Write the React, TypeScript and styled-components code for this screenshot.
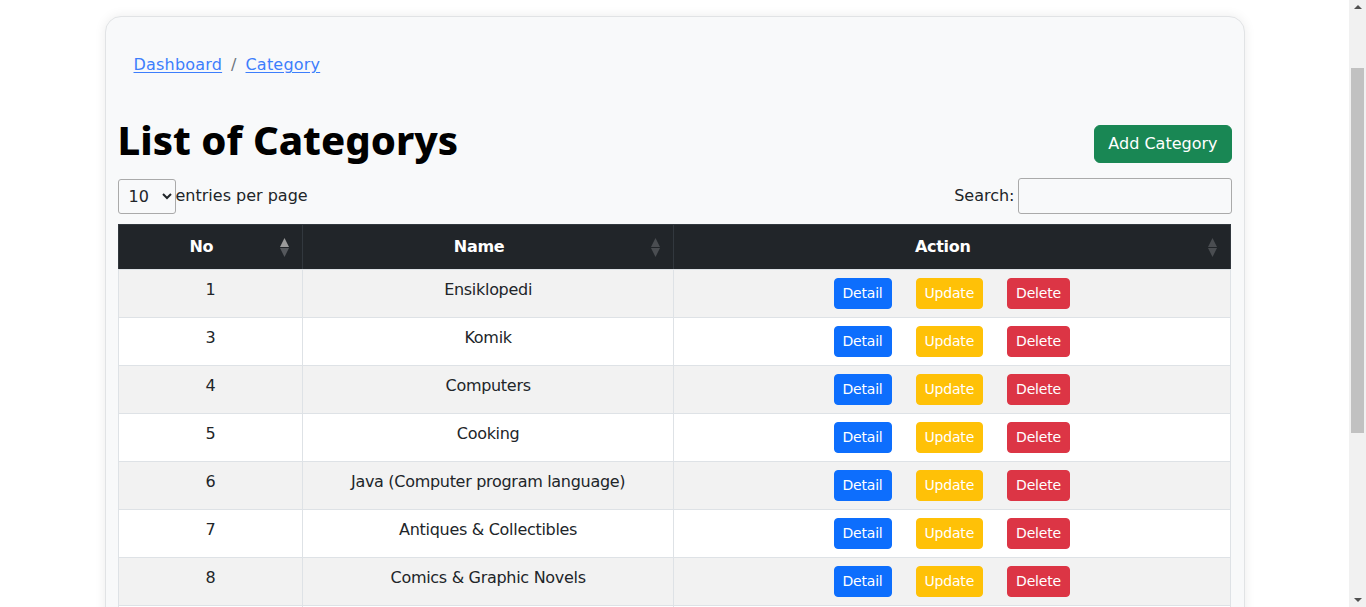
import React from "react";
import styled, { createGlobalStyle } from "styled-components";

const GlobalStyle = createGlobalStyle`
  html, body {
    margin: 0;
    padding: 0;
    background: #ffffff;
  }
  body {
    font-family: "DejaVu Sans", "Noto Sans", sans-serif;
    font-size: 16px;
    line-height: 1.5;
    color: #212529;
    padding: 0 17px 120px 0;
  }
  * { box-sizing: border-box; }
`;

const ScrollTrack = styled.div`
  position: fixed;
  top: 0;
  right: 0;
  width: 17px;
  height: 100vh;
  background: #f1f1f1;
  display: flex;
  flex-direction: column;
  align-items: center;
  justify-content: space-between;
  padding: 5px 0;
`;

const ScrollThumb = styled.div`
  position: absolute;
  top: 68px;
  left: 2px;
  width: 13px;
  height: 365px;
  background: #c1c1c1;
`;

const Arrow = styled.div<{ $down?: boolean }>`
  width: 0;
  height: 0;
  border-left: 4px solid transparent;
  border-right: 4px solid transparent;
  ${(p) =>
    p.$down ? "border-top: 4px solid #505050;" : "border-bottom: 4px solid #505050;"}
`;

const Card = styled.main`
  width: 1140px;
  margin: 16px auto 0;
  padding: 12px;
  background: #f8f9fa;
  border: 1px solid #e1e3e5;
  border-radius: 16px;
  box-shadow: 0 0 12px rgba(0, 0, 0, 0.08);
`;

const Breadcrumb = styled.nav`
  display: flex;
  align-items: center;
  padding: 24px 16px 0;
  margin-bottom: 39px;
  font-size: 16px;
`;

const CrumbLink = styled.a`
  color: #3d7efc;
  text-decoration: underline;
  text-underline-offset: 2px;
  letter-spacing: 0.2px;
`;

const Separator = styled.span`
  color: #6c757d;
  padding: 0 9px;
`;

const HeaderRow = styled.div`
  display: flex;
  align-items: center;
  justify-content: space-between;
`;

const Title = styled.h1`
  margin: 0 0 8px;
  font-family: "Noto Sans", "DejaVu Sans", sans-serif;
  font-size: 40px;
  font-weight: 800;
  line-height: 1.2;
  color: #000;
`;

const AddButton = styled.button`
  font-family: inherit;
  font-size: 16px;
  line-height: 1.5;
  color: #fff;
  background: #198754;
  border: 1px solid #198754;
  border-radius: 6px;
  padding: 6px 13px;
  cursor: pointer;
`;

const Controls = styled.div`
  display: flex;
  align-items: center;
  justify-content: space-between;
  margin-top: 6px;
  margin-bottom: 10px;
`;

const Group = styled.label`
  display: flex;
  align-items: center;
  font-size: 16px;
`;

const PageSelect = styled.select`
  width: 58px;
  height: 35px;
  padding: 4px 6px;
  font-family: inherit;
  font-size: 16px;
  color: #212529;
  background: transparent;
  border: 1px solid #aaa;
  border-radius: 3px;
`;

const SearchInput = styled.input`
  width: 214px;
  height: 36px;
  margin-left: 3px;
  padding: 4px 8px;
  font-family: inherit;
  font-size: 16px;
  background: transparent;
  border: 1px solid #aaa;
  border-radius: 3px;
`;

const Table = styled.table`
  width: 1113px;
  border-collapse: collapse;
  font-size: 16px;
`;

const Th = styled.th<{ $w: number }>`
  position: relative;
  width: ${(p) => p.$w}px;
  padding: 10px 28px 10px 10px;
  height: 45px;
  background: #212529;
  color: #fff;
  font-weight: 700;
  text-align: center;
  border: 1px solid #32383e;
  border-bottom: 1px solid #dee2e6;
  letter-spacing: -0.3px;
`;

const SortIcon = styled.svg`
  position: absolute;
  right: 13px;
  top: 13px;
`;

const Tr = styled.tr<{ $striped: boolean }>`
  background: ${(p) => (p.$striped ? "#f2f2f2" : "#ffffff")};
`;

const Td = styled.td`
  height: 48px;
  padding: 8px;
  text-align: center;
  vertical-align: top;
  border: 1px solid #dee2e6;
  letter-spacing: -0.3px;
`;

const Actions = styled.div`
  display: flex;
  justify-content: center;
  gap: 24px;
`;

const SmallButton = styled.button<{ $bg: string }>`
  font-family: inherit;
  font-size: 14px;
  line-height: 1.5;
  letter-spacing: -0.2px;
  color: #fff;
  background: ${(p) => p.$bg};
  border: 1px solid ${(p) => p.$bg};
  border-radius: 4px;
  padding: 4px 8px;
  cursor: pointer;
`;

const Footer = styled.div`
  display: flex;
  justify-content: space-between;
  align-items: center;
  padding: 12px 0 4px;
  font-size: 16px;
`;

const Pager = styled.div`
  display: flex;
  gap: 4px;
`;

const PageBtn = styled.span<{ $active?: boolean }>`
  padding: 4px 12px;
  border: 1px solid ${(p) => (p.$active ? "#aaa" : "transparent")};
  border-radius: 3px;
  background: ${(p) => (p.$active ? "#e9e9e9" : "transparent")};
  color: ${(p) => (p.$active ? "#212529" : "#6c757d")};
`;

const Sort = ({ active }: { active?: boolean }) => (
  <SortIcon width="9" height="19" viewBox="0 0 9 19">
    <polygon points="4.5,0 9,9 0,9" fill={active ? "#9a9a9a" : "#4a4d51"} />
    <polygon points="0,10 9,10 4.5,19" fill={active ? "#55585c" : "#4a4d51"} />
  </SortIcon>
);

const rows = [
  { no: 1, name: "Ensiklopedi" },
  { no: 3, name: "Komik" },
  { no: 4, name: "Computers" },
  { no: 5, name: "Cooking" },
  { no: 6, name: "Java (Computer program language)" },
  { no: 7, name: "Antiques & Collectibles" },
  { no: 8, name: "Comics & Graphic Novels" },
  { no: 9, name: "Fiction" },
  { no: 10, name: "History" },
  { no: 11, name: "Science" },
];

export default function App() {
  return (
    <>
      <GlobalStyle />
      <Card>
        <Breadcrumb>
          <CrumbLink href="#">Dashboard</CrumbLink>
          <Separator>/</Separator>
          <CrumbLink href="#">Category</CrumbLink>
        </Breadcrumb>
        <HeaderRow>
          <Title>List of Categorys</Title>
          <AddButton>Add Category</AddButton>
        </HeaderRow>
        <Controls>
          <Group>
            <PageSelect defaultValue="10">
              <option value="5">5</option>
              <option value="10">10</option>
              <option value="15">15</option>
              <option value="20">20</option>
            </PageSelect>
            entries per page
          </Group>
          <Group>
            Search:
            <SearchInput type="search" />
          </Group>
        </Controls>
        <Table>
          <thead>
            <tr>
              <Th $w={185}>
                No
                <Sort active />
              </Th>
              <Th $w={371}>
                Name
                <Sort />
              </Th>
              <Th $w={557}>
                Action
                <Sort />
              </Th>
            </tr>
          </thead>
          <tbody>
            {rows.map((r, i) => (
              <Tr key={r.no} $striped={i % 2 === 0}>
                <Td>{r.no}</Td>
                <Td>{r.name}</Td>
                <Td>
                  <Actions>
                    <SmallButton $bg="#0d6efd">Detail</SmallButton>
                    <SmallButton $bg="#ffc107">Update</SmallButton>
                    <SmallButton $bg="#dc3545">Delete</SmallButton>
                  </Actions>
                </Td>
              </Tr>
            ))}
          </tbody>
        </Table>
        <Footer>
          <span>Showing 1 to 10 of 10 entries</span>
          <Pager>
            <PageBtn>‹</PageBtn>
            <PageBtn $active>1</PageBtn>
            <PageBtn>›</PageBtn>
          </Pager>
        </Footer>
      </Card>
      <ScrollTrack aria-hidden>
        <Arrow />
        <ScrollThumb />
        <Arrow $down />
      </ScrollTrack>
    </>
  );
}
